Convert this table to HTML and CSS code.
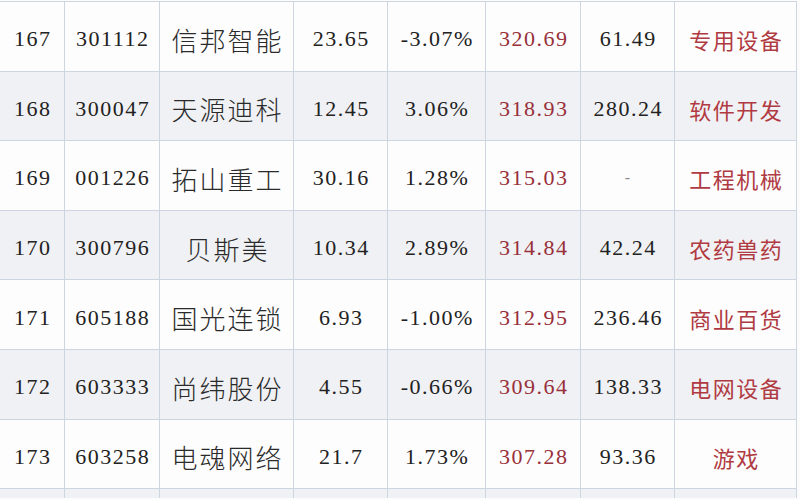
FILE: index.html
```html
<!DOCTYPE html>
<html lang="zh-CN">
<head>
<meta charset="utf-8">
<title>股票列表</title>
<link rel="stylesheet" href="styles.css">
</head>
<body>
<div class="grid">
  <div class="row odd">
    <div class="cell num">167</div><div class="cell num">301112</div><div class="cell name">信邦智能</div><div class="cell num">23.65</div><div class="cell num">-3.07%</div><div class="cell num red">320.69</div><div class="cell num">61.49</div><div class="cell cat">专用设备</div>
  </div>
  <div class="row even">
    <div class="cell num">168</div><div class="cell num">300047</div><div class="cell name">天源迪科</div><div class="cell num">12.45</div><div class="cell num">3.06%</div><div class="cell num red">318.93</div><div class="cell num">280.24</div><div class="cell cat">软件开发</div>
  </div>
  <div class="row odd">
    <div class="cell num">169</div><div class="cell num">001226</div><div class="cell name">拓山重工</div><div class="cell num">30.16</div><div class="cell num">1.28%</div><div class="cell num red">315.03</div><div class="cell num dash">-</div><div class="cell cat">工程机械</div>
  </div>
  <div class="row even">
    <div class="cell num">170</div><div class="cell num">300796</div><div class="cell name">贝斯美</div><div class="cell num">10.34</div><div class="cell num">2.89%</div><div class="cell num red">314.84</div><div class="cell num">42.24</div><div class="cell cat">农药兽药</div>
  </div>
  <div class="row odd">
    <div class="cell num">171</div><div class="cell num">605188</div><div class="cell name">国光连锁</div><div class="cell num">6.93</div><div class="cell num">-1.00%</div><div class="cell num red">312.95</div><div class="cell num">236.46</div><div class="cell cat">商业百货</div>
  </div>
  <div class="row even">
    <div class="cell num">172</div><div class="cell num">603333</div><div class="cell name">尚纬股份</div><div class="cell num">4.55</div><div class="cell num">-0.66%</div><div class="cell num red">309.64</div><div class="cell num">138.33</div><div class="cell cat">电网设备</div>
  </div>
  <div class="row odd">
    <div class="cell num">173</div><div class="cell num">603258</div><div class="cell name">电魂网络</div><div class="cell num">21.7</div><div class="cell num">1.73%</div><div class="cell num red">307.28</div><div class="cell num">93.36</div><div class="cell cat">游戏</div>
  </div>
  <div class="row even last">
    <div class="cell"></div><div class="cell"></div><div class="cell"></div><div class="cell"></div><div class="cell"></div><div class="cell"></div><div class="cell"></div><div class="cell"></div>
  </div>
</div>
</body>
</html>
```

FILE: styles.css
```css
html, body {
  margin: 0;
  padding: 0;
  background: #fcfcfd;
  overflow: hidden;
}
body {
  width: 800px;
  height: 500px;
  font-family: "Liberation Serif", "Noto Sans CJK SC", serif;
  color: #262626;
}
.grid {
  display: grid;
  grid-template-columns: 64px 94px 133px 93px 97px 94px 93px 121px;
  grid-template-rows: repeat(7, 68.6px) 9px;
  gap: 1px;
  width: fit-content;
  margin-top: 1px;
  padding: 1px 1px 0 0;
  background: #cdd5e0;
}
.row {
  display: contents;
}
.cell {
  display: flex;
  align-items: center;
  justify-content: center;
  padding-top: 6px;
  box-sizing: border-box;
  white-space: nowrap;
}
.last .cell {
  padding-top: 0;
}
.odd .cell {
  background: #fdfdfd;
}
.even .cell {
  background: #f0f1f4;
}
.num {
  font-size: 22px;
  letter-spacing: 1.5px;
  padding-left: 1.5px;
  color: #222222;
}
.red {
  color: #98303a;
}
.dash {
  color: #8a8a8a;
  font-size: 16px;
}
.name {
  font-family: "Noto Sans CJK SC", sans-serif;
  font-size: 26px;
  font-weight: 300;
  letter-spacing: 2px;
  padding-left: 2px;
  color: #2a2a2a;
}
.cat {
  font-family: "Noto Sans CJK SC", sans-serif;
  font-size: 22px;
  font-weight: 400;
  letter-spacing: 1.5px;
  padding-left: 1.5px;
  color: #b03a42;
}
```
